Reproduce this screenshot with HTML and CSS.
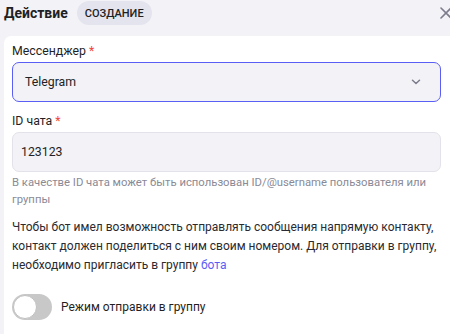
FILE: index.html
```html
<!DOCTYPE html>
<html lang="ru">
<head>
<meta charset="utf-8">
<link rel="stylesheet" href="styles.css">
</head>
<body>
<div class="panel">
  <header class="head">
    <h1 class="title">Действие</h1>
    <span class="badge">СОЗДАНИЕ</span>
    <button class="close" aria-label="Закрыть">
      <svg width="12" height="12" viewBox="0 0 12 12"><path d="M1 1L11 11M11 1L1 11" stroke="#7c7c8c" stroke-width="1.6" stroke-linecap="round"/></svg>
    </button>
  </header>
  <main class="card">
    <div class="field">
      <label class="label">Мессенджер <span class="req">*</span></label>
      <div class="select">
        <span class="value">Telegram</span>
        <svg class="chev" width="10" height="6" viewBox="0 0 10 6"><path d="M1.5 1.2L5 4.5L8.5 1.2" fill="none" stroke="#7c7c8c" stroke-width="1.5" stroke-linecap="round" stroke-linejoin="round"/></svg>
      </div>
    </div>
    <div class="field">
      <label class="label">ID чата <span class="req">*</span></label>
      <div class="input"><span class="value">123123</span></div>
      <p class="hint">В качестве ID чата может быть использован ID/@username пользователя или группы</p>
    </div>
    <p class="info">Чтобы бот имел возможность отправлять сообщения напрямую контакту,<br>контакт должен поделиться с ним своим номером. Для отправки в группу,<br>необходимо пригласить в группу <a class="link" href="#">бота</a></p>
    <div class="toggle-row">
      <span class="toggle"><span class="knob"></span></span>
      <span class="toggle-label">Режим отправки в группу</span>
    </div>
  </main>
</div>
</body>
</html>
```

FILE: styles.css
```css
* { box-sizing: border-box; }
html, body { margin: 0; padding: 0; }
body {
  background: #f2f2f7;
  font-family: Roboto, "Noto Sans", sans-serif;
  color: #1f1f24;
  width: 450px;
  height: 334px;
  overflow: hidden;
}
.panel {
  display: flex;
  flex-direction: column;
  height: 100%;
  padding-left: 4px;
}
.head {
  display: flex;
  align-items: center;
  height: 36px;
  padding-bottom: 11px;
  gap: 9px;
}
.title {
  margin: 0;
  font-size: 14px;
  font-weight: 700;
  color: #1f1f24;
}
.badge {
  background: #e4e4ee;
  border-radius: 12px;
  font-size: 11px;
  font-weight: 500;
  padding: 6px 8px 5px;
  line-height: 13px;
  color: #1f1f24;
}
.close {
  margin-left: auto;
  border: 0;
  background: none;
  padding: 0;
  margin-right: -2px;
  margin-top: 1px;
  display: flex;
}
.card {
  flex: 1;
  background: #fff;
  border-top-left-radius: 7px;
  padding: 8px 9px 0 8px;
}
.field { display: flex; flex-direction: column; }
.label {
  font-size: 12.3px;
  line-height: 15px;
  color: #1f1f24;
  margin-bottom: 3px;
}
.req { color: #f0443a; }
.select, .input {
  height: 40px;
  border-radius: 7px;
  background: #f2f2f7;
  display: flex;
  align-items: center;
}
.select {
  border: 1px solid #5a5ef5;
  padding: 0 19px 0 12px;
  margin-bottom: 12px;
}
.input {
  border: 1px solid #e2e2ea;
  padding: 0 8px;
}
.value { font-size: 12.3px; color: #1f1f24; flex: 1; }
.chev { flex: none; }
.hint {
  margin: 2px 0 0;
  font-size: 11.3px;
  line-height: 17px;
  color: #8a8a96;
}
.info {
  margin: 10px -9px 0 0;
  font-size: 12px;
  line-height: 19px;
  color: #2a2a30;
  white-space: nowrap;
}
.link { color: #5a5ef5; text-decoration: none; }
.toggle-row {
  display: flex;
  align-items: center;
  gap: 9px;
  margin-top: 19px;
}
.toggle {
  width: 40px;
  height: 26px;
  border-radius: 13px;
  background: #c8c8c8;
  position: relative;
  display: block;
}
.knob {
  position: absolute;
  left: 1px;
  top: 1px;
  width: 24px;
  height: 24px;
  border-radius: 50%;
  background: #fff;
  border: 1px solid #c0c0c0;
}
.toggle-label { font-size: 12px; color: #1f1f24; }
```
